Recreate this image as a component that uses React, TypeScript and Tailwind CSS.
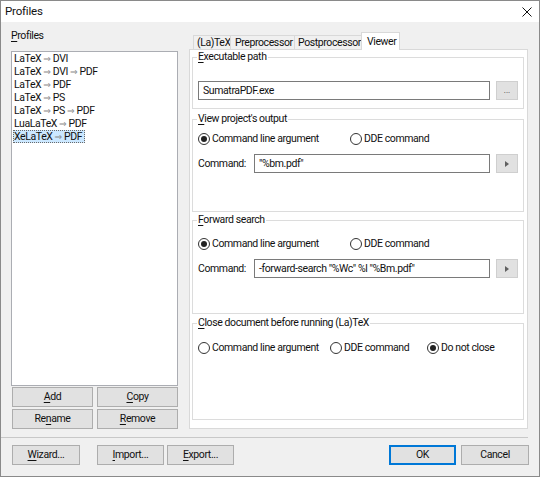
import React from 'react';

const Acc = ({ children }: { children: React.ReactNode }) => (
  <span className="underline underline-offset-[2px]">{children}</span>
);

const Arrow = () => (
  <span className="text-[#8a8a8a] px-[2px] font-['DejaVu_Sans'] text-[9px] tracking-normal">⇒</span>
);

function Btn({ children, className = '' }: { children: React.ReactNode; className?: string }) {
  return (
    <div
      className={`flex items-center justify-center bg-[#e1e1e1] border border-[#adadad] leading-none ${className}`}
    >
      {children}
    </div>
  );
}

function Radio({ label, checked = false, className = '' }: { label: string; checked?: boolean; className?: string }) {
  return (
    <div className={`flex items-center gap-[2px] h-[14px] ${className}`}>
      <div className="w-[12px] h-[12px] shrink-0 rounded-full border border-[#333] bg-white flex items-center justify-center">
        {checked && <div className="w-[6px] h-[6px] rounded-full bg-[#222]" />}
      </div>
      <span>{label}</span>
    </div>
  );
}

function SideButton({ children }: { children: React.ReactNode }) {
  return (
    <div className="w-[22px] h-[19px] ml-[6px] bg-[#e1e1e1] border border-[#cfcfcf] flex items-center justify-center">
      {children}
    </div>
  );
}

const Triangle = () => (
  <svg width="4" height="6" viewBox="0 0 4 6">
    <polygon points="0,0 4,3 0,6" fill="#606060" />
  </svg>
);

function CommandRow({ value }: { value: string }) {
  return (
    <div className="flex items-center mt-[8px]">
      <span className="w-[56px]">Command:</span>
      <div className="w-[236px] h-[19px] border border-[#7a7a7a] bg-white pl-[4px] flex items-center">{value}</div>
      <SideButton>
        <Triangle />
      </SideButton>
    </div>
  );
}

function Group({ title, children, className = '' }: { title: React.ReactNode; children: React.ReactNode; className?: string }) {
  return (
    <fieldset className={`w-[332px] border border-[#dcdcdc] pl-[5px] ${className}`}>
      <legend className="leading-[14px] px-[1px] -ml-[1px]">{title}</legend>
      {children}
    </fieldset>
  );
}

const profiles: React.ReactNode[][] = [
  ['LaTeX', 'DVI'],
  ['LaTeX', 'DVI', 'PDF'],
  ['LaTeX', 'PDF'],
  ['LaTeX', 'PS'],
  ['LaTeX', 'PS', 'PDF'],
  ['LuaLaTeX', 'PDF'],
  ['XeLaTeX', 'PDF'],
];

const tabBase = 'h-[14px] border border-b-0 border-[#d9d9d9] bg-[#f0f0f0] flex items-center pl-[3px]';

export default function App() {
  return (
    <div className="w-[540px] h-[477px] bg-[#f0f0f0] border border-[#8a8a8a] flex flex-col font-['Roboto',sans-serif] text-[10.5px] tracking-[-0.4px] text-[#111] overflow-hidden whitespace-nowrap">
      {/* Title bar */}
      <div className="h-[21px] bg-white flex items-center justify-between pl-[4px] pr-[7px] text-[11.5px] tracking-[-0.2px]">
        <span>Profiles</span>
        <svg width="10" height="10" viewBox="0 0 10 10">
          <path d="M0.5 0.5 L9.5 9.5 M9.5 0.5 L0.5 9.5" stroke="#111" strokeWidth="1" />
        </svg>
      </div>

      {/* Body */}
      <div className="flex pt-[7px]">
        {/* Left column */}
        <div className="ml-[10px] w-[167px] flex flex-col">
          <div className="leading-[14px]">
            <Acc>P</Acc>rofiles
          </div>
          <div className="mt-[8px] h-[335px] bg-white border border-[#abadb3] pl-[1px]">
            {profiles.map((parts, i) => {
              const selected = i === profiles.length - 1;
              return (
                <div key={i} className="leading-[13px] h-[13px] flex">
                  <span
                    className={
                      selected
                        ? 'bg-[#cce8ff] border border-dotted border-[#6a6a6a] pr-[2px] leading-[11px]'
                        : 'pl-[1px]'
                    }
                  >
                    {parts.map((p, j) => (
                      <React.Fragment key={j}>
                        {j > 0 && <Arrow />}
                        {p}
                      </React.Fragment>
                    ))}
                  </span>
                </div>
              );
            })}
          </div>
          <div className="grid grid-cols-[81px_81px] gap-x-[4px] gap-y-[2px] mt-[1px] pl-[1px]">
            <Btn className="h-[20px]">
              <Acc>A</Acc>dd
            </Btn>
            <Btn className="h-[20px]">
              <Acc>C</Acc>opy
            </Btn>
            <Btn className="h-[20px]">
              Re<Acc>n</Acc>ame
            </Btn>
            <Btn className="h-[20px]">
              <Acc>R</Acc>emove
            </Btn>
          </div>
        </div>

        {/* Right column */}
        <div className="ml-[11px] w-[339px] flex flex-col">
          <div className="mt-[3px] h-[17px] flex items-end pl-[4px]">
            <div className={`${tabBase} w-[38px]`}>(La)TeX</div>
            <div className={`${tabBase} -ml-px w-[65px] pl-[4px]`}>Preprocessor</div>
            <div className={`${tabBase} -ml-px w-[68px]`}>Postprocessor</div>
            <div className="-ml-px -mb-px relative z-10 w-[39px] h-[18px] border border-b-0 border-[#d9d9d9] bg-white flex items-start pl-[5px] pt-[1px]">
              Viewer
            </div>
          </div>
          <div className="h-[380px] border border-[#d9d9d9] bg-white pl-[2px] flex flex-col">
            <Group
              title={
                <>
                  <Acc>E</Acc>xecutable path
                </>
              }
            >
              <div className="flex items-center mt-[17px] mb-[8px]">
                <div className="w-[292px] h-[19px] border border-[#7a7a7a] bg-white pl-[4px] flex items-center">
                  SumatraPDF.exe
                </div>
                <SideButton>
                  <span className="text-[8px] leading-none text-[#333] tracking-normal">...</span>
                </SideButton>
              </div>
            </Group>

            <Group
              className="mt-[3px]"
              title={
                <>
                  <Acc>V</Acc>iew project's output
                </>
              }
            >
              <div className="flex mt-[6px]">
                <Radio label="Command line argument" checked className="w-[152px]" />
                <Radio label="DDE command" />
              </div>
              <div className="mb-[38px]">
                <CommandRow value={'"%bm.pdf"'} />
              </div>
            </Group>

            <Group
              className="mt-[1px]"
              title={
                <>
                  <Acc>F</Acc>orward search
                </>
              }
            >
              <div className="flex mt-[10px]">
                <Radio label="Command line argument" checked className="w-[152px]" />
                <Radio label="DDE command" />
              </div>
              <div className="mb-[35px]">
                <CommandRow value={'-forward-search "%Wc" %l "%Bm.pdf"'} />
              </div>
            </Group>

            <Group
              className="mt-[2px]"
              title={
                <>
                  <Acc>C</Acc>lose document before running (La)TeX
                </>
              }
            >
              <div className="flex mt-[11px] mb-[64px]">
                <Radio label="Command line argument" className="w-[132px]" />
                <Radio label="DDE command" className="w-[97px]" />
                <Radio label="Do not close" checked />
              </div>
            </Group>
          </div>
        </div>
      </div>

      {/* Separator */}
      <div className="mt-[8px] w-[527px] border-t border-[#c8c8c8]" />

      {/* Bottom buttons */}
      <div className="flex mt-[7px]">
        <Btn className="ml-[11px] w-[68px] h-[20px]">
          <Acc>W</Acc>izard...
        </Btn>
        <Btn className="ml-[17px] w-[67px] h-[20px]">
          <Acc>I</Acc>mport...
        </Btn>
        <Btn className="ml-[3px] w-[67px] h-[20px]">
          <Acc>E</Acc>xport...
        </Btn>
        <Btn className="ml-[155px] w-[67px] h-[20px] !border-[#0078d7] shadow-[inset_0_0_0_1px_#0078d7]">OK</Btn>
        <Btn className="ml-[5px] w-[68px] h-[20px]">Cancel</Btn>
      </div>
    </div>
  );
}
